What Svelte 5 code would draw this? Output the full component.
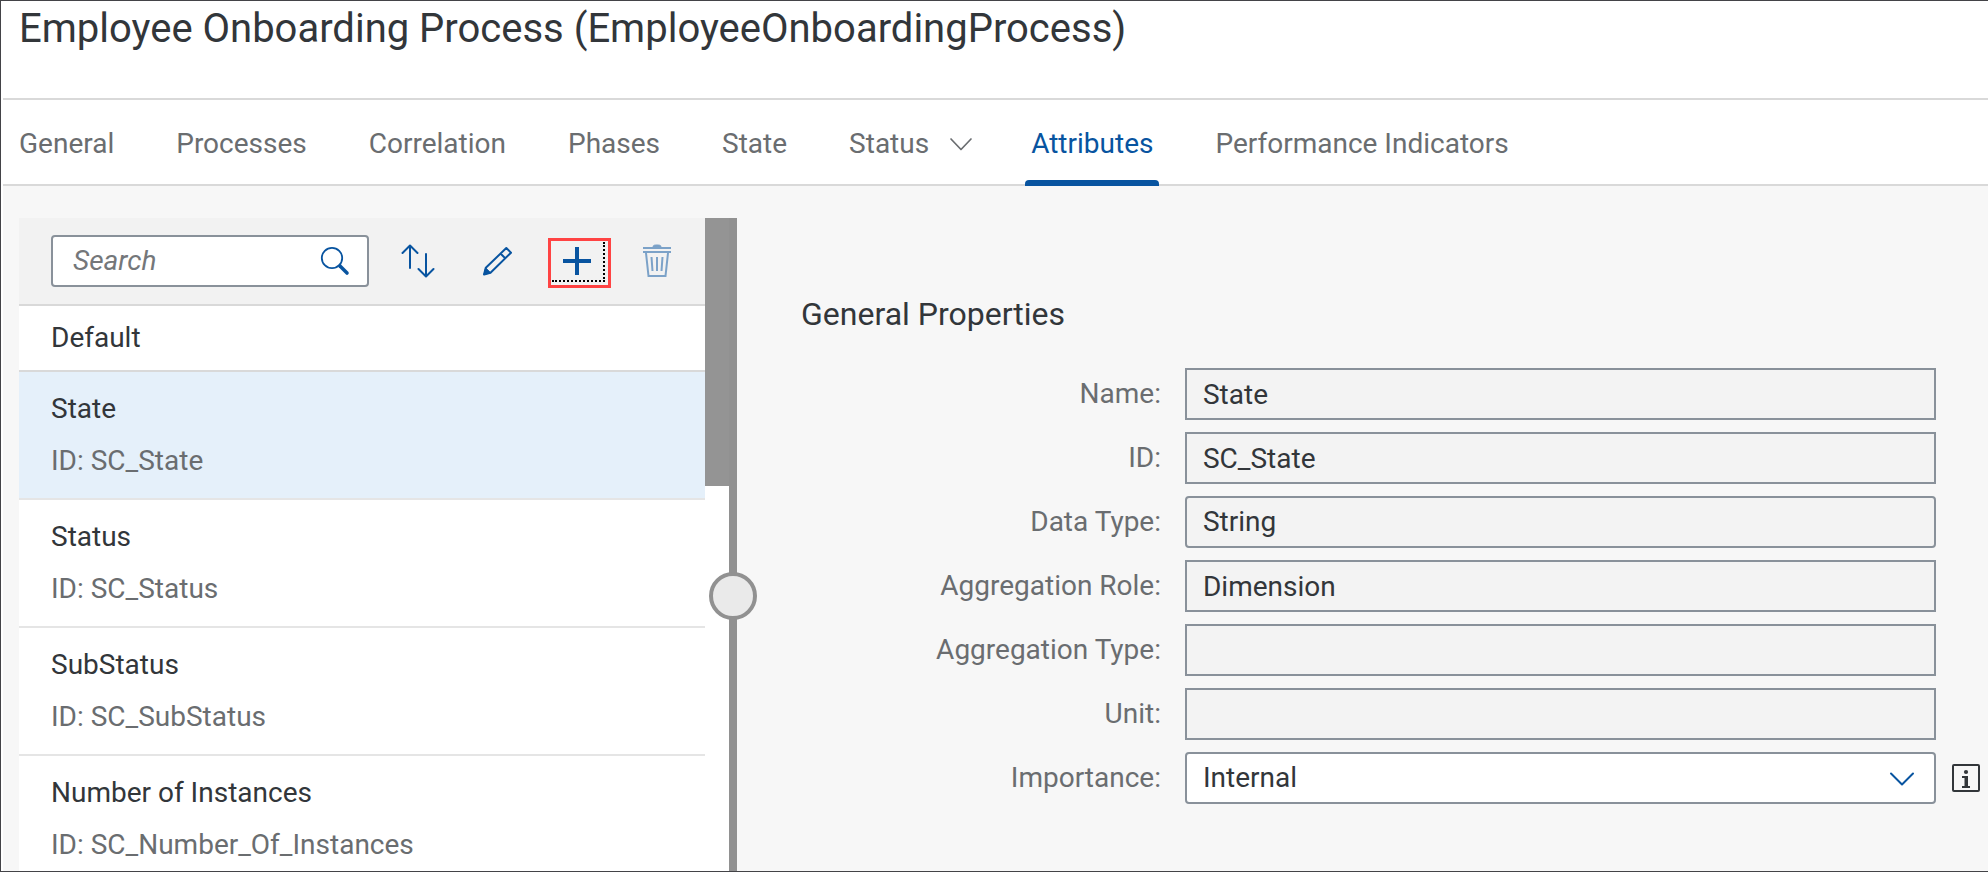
<script>
  const tabs = ['General', 'Processes', 'Correlation', 'Phases', 'State', 'Status', 'Attributes', 'Performance Indicators'];
  let activeTab = $state('Attributes');

  const attributes = [
    { name: 'State', id: 'SC_State' },
    { name: 'Status', id: 'SC_Status' },
    { name: 'SubStatus', id: 'SC_SubStatus' },
    { name: 'Number of Instances', id: 'SC_Number_Of_Instances' }
  ];
  let selected = $state('SC_State');

  const fields = [
    { key: 'name', label: 'Name', value: 'State' },
    { key: 'id', label: 'ID', value: 'SC_State' },
    { key: 'type', label: 'Data Type', value: 'String', select: true },
    { key: 'role', label: 'Aggregation Role', value: 'Dimension' },
    { key: 'aggregation', label: 'Aggregation Type', value: '' },
    { key: 'unit', label: 'Unit', value: '' }
  ];
</script>

<div class="app">
  <header>
    <h1>Employee Onboarding Process (EmployeeOnboardingProcess)</h1>
  </header>

  <nav class="tabs">
    {#each tabs as tab}
      <button class="tab" class:active={tab === activeTab} onclick={() => (activeTab = tab)}>
        <span>{tab}</span>
        {#if tab === 'Status'}
          <svg width="24" height="24" viewBox="0 0 24 24" fill="none" stroke="currentColor" stroke-width="1.7" stroke-linecap="round" stroke-linejoin="round"><path d="M2 7 12 17.5 22 7" /></svg>
        {/if}
      </button>
    {/each}
  </nav>

  <main>
    <section class="master">
      <div class="list">
        <div class="toolbar">
          <div class="search">
            <input type="text" placeholder="Search" aria-label="Search" />
            <button class="find" aria-label="Find">
              <svg width="32" height="32" viewBox="0 0 32 32" fill="none" stroke="currentColor" stroke-linecap="round"><circle cx="13" cy="13" r="10.2" stroke-width="1.8" /><path d="m21 21 7 7" stroke-width="3.6" /></svg>
            </button>
          </div>
          <button class="tool" aria-label="Sort">
            <svg width="36" height="36" viewBox="0 0 36 36" fill="none" stroke="currentColor" stroke-width="2" stroke-linecap="round" stroke-linejoin="round"><path d="M11 25V3M3.5 10 11 2.500 18.5 10M27 11v22M19.5 26 27 33.5 34.5 26" /></svg>
          </button>
          <button class="tool" aria-label="Edit">
            <svg width="32" height="32" viewBox="0 0 32 32" fill="none" stroke="currentColor" stroke-width="2" stroke-linejoin="round"><path d="M3 29.5 4.8 22.8 25.3 3 30 7.7 9.5 27.7ZM19.5 8.5l4.7 4.7" /><path d="m3 29.5 1.6-6.7 5 5Z" fill="currentColor" stroke-width="1" /></svg>
          </button>
          <button class="tool" aria-label="Add">
            <svg width="32" height="32" viewBox="0 0 32 32" fill="none" stroke="currentColor" stroke-width="4"><path d="M2 16h28M16 2v28" /></svg>
            <span class="highlight"></span>
          </button>
          <button class="tool" aria-label="Delete" disabled>
            <svg width="32" height="36" viewBox="0 0 32 36" fill="none" stroke="currentColor" stroke-width="2"><path d="M2 5h28M2 9h28M5 10l2.5 23h17L27 10M10.5 14l1 14M16 14v14M21.5 14l-1 14" /><path d="M12 4c0-2 2-2 4-2s4 0 4 2Z" fill="currentColor" stroke-width="1" /></svg>
          </button>
        </div>
        <h2 class="group">Default</h2>
        <div class="items">
          {#each attributes as item}
            <button class="item" class:selected={item.id === selected} onclick={() => (selected = item.id)}>
              <span>{item.name}</span>
              <span class="sub">ID: {item.id}</span>
            </button>
          {/each}
        </div>
      </div>
      <div class="track"><div class="thumb"></div></div>
      <div class="splitter"><span class="grip"></span></div>
    </section>

    <section class="detail">
      <h2>General Properties</h2>
      <form>
        {#each fields as field}
          <div class="row">
            <label for={field.key}>{field.label}:</label>
            {#if field.select}
              <select id={field.key} class="field rounded" disabled><option>{field.value}</option></select>
            {:else}
              <input id={field.key} class="field" type="text" value={field.value} readonly />
            {/if}
          </div>
        {/each}
        <div class="row">
          <label for="importance">Importance:</label>
          <div class="picker">
            <select id="importance" class="field rounded editable"><option>Internal</option></select>
            <svg class="arrow" width="28" height="24" viewBox="0 0 28 24" fill="none" stroke="currentColor" stroke-width="2" stroke-linecap="round" stroke-linejoin="round"><path d="M3 7.5 14 18.5 25 7.5" /></svg>
          </div>
          <button type="button" class="info" aria-label="Information">
            <svg width="28" height="28" viewBox="0 0 28 28"><rect x="1" y="1" width="26" height="26" rx="1" fill="none" stroke="currentColor" stroke-width="2" /><circle cx="14" cy="8" r="2.1" fill="currentColor" /><path d="M10 12h6v10h2v2h-8v-2h2.5v-8H10Z" fill="currentColor" /></svg>
          </button>
        </div>
      </form>
    </section>
  </main>
</div>

<style>
  :global(body) {
    margin: 0;
  }
  .app {
    box-sizing: border-box;
    height: 100vh;
    overflow: hidden;
    display: flex;
    flex-direction: column;
    padding-left: 2px;
    border: 1px solid #434347;
    border-right: 0;
    background: #fff;
    color: #32363a;
    font: 28px/38px Roboto, Arial, sans-serif;
  }
  h1, h2 {
    margin: 0;
    font-weight: 400;
  }
  button, input, select {
    box-sizing: border-box;
    margin: 0;
    padding: 0;
    border: 0;
    background: none;
    color: inherit;
    font: inherit;
  }
  svg {
    display: block;
    flex: none;
  }
  header {
    padding: 3px 16px 44px;
    border-bottom: 2px solid #d9d9d9;
  }
  h1 {
    font-size: 40px;
    line-height: 50px;
  }
  .tabs {
    display: flex;
    flex: none;
    gap: 62px;
    height: 84px;
    padding: 0 16px;
    border-bottom: 2px solid #d9d9d9;
    color: #6a6d70;
  }
  .tab {
    position: relative;
    display: flex;
    align-items: center;
    gap: 20px;
    padding-top: 4px;
    white-space: nowrap;
  }
  .tab svg {
    margin-right: -4px;
  }
  .active {
    color: #0854a0;
  }
  .active::after {
    content: '';
    position: absolute;
    left: -6px;
    right: -6px;
    bottom: -2px;
    height: 6px;
    border-radius: 4px 4px 0 0;
    background: #0854a0;
  }
  main {
    flex: 1;
    min-height: 0;
    display: flex;
    padding: 32px 8px 0 16px;
    background: #f7f7f7;
  }
  .master {
    display: flex;
    flex: 0 0 718px;
    min-width: 0;
    max-width: 50%;
    background: #fff;
  }
  .list {
    flex: 1 1 0;
    min-width: 0;
    overflow: hidden;
  }
  .toolbar {
    display: flex;
    align-items: center;
    gap: 8px;
    height: 86px;
    padding: 0 12px 0 32px;
    border-bottom: 2px solid #d9d9d9;
    background: #f2f2f2;
  }
  .search {
    box-sizing: border-box;
    display: flex;
    flex: 1 1 0;
    min-width: 0;
    height: 52px;
    margin-right: 4px;
    padding: 0 16px 0 20px;
    border: 2px solid #89919a;
    border-radius: 4px;
    background: #fff;
  }
  .search input {
    flex: 1 1 0;
    width: 0;
    min-width: 0;
    outline: none;
  }
  .search input::placeholder {
    color: #74777a;
    font-style: italic;
    opacity: 1;
  }
  .find, .tool {
    display: flex;
    align-items: center;
    justify-content: center;
    color: #0854a0;
  }
  .tool {
    position: relative;
    flex: 0 0 72px;
    height: 52px;
  }
  .tool:disabled {
    opacity: 0.5;
  }
  .highlight {
    position: absolute;
    inset: 3px 2px -1px 7px;
    border: 3px solid #ff4343;
  }
  .highlight::after {
    content: '';
    position: absolute;
    inset: 1px 3px 3px 1px;
    border: 2px dotted #000;
    border-width: 0 2px 2px 0;
  }
  .group {
    height: 64px;
    padding-left: 32px;
    border-bottom: 2px solid #d9d9d9;
    font-size: 28px;
    line-height: 64px;
  }
  .items {
    display: flex;
    flex-direction: column;
  }
  .item {
    display: flex;
    flex-direction: column;
    gap: 14px;
    padding: 18px 32px;
    border-bottom: 2px solid #e5e5e5;
    text-align: left;
  }
  .selected {
    background: #e5f0fa;
  }
  .sub {
    color: #6a6d70;
  }
  .track {
    flex: 0 0 24px;
  }
  .thumb {
    height: 41%;
    background: #949494;
  }
  .splitter {
    position: relative;
    flex: 0 0 8px;
    background: #919191;
  }
  .grip {
    position: absolute;
    top: 354px;
    left: -20px;
    box-sizing: border-box;
    width: 48px;
    height: 48px;
    border: 4px solid #919191;
    border-radius: 50%;
    background: #eaeaea;
  }
  .detail {
    flex: 1;
    min-width: 0;
    padding: 76px 0 0 64px;
  }
  .detail h2 {
    font-size: 32px;
    line-height: 40px;
  }
  form {
    display: flex;
    flex-direction: column;
    gap: 12px;
    margin-top: 34px;
  }
  .row {
    display: grid;
    grid-template-columns: minmax(0, 49fr) minmax(0, 100fr) 28px;
    align-items: center;
    column-gap: 16px;
  }
  label {
    padding-right: 8px;
    color: #6a6d70;
    text-align: right;
  }
  .field {
    width: 100%;
    height: 52px;
    padding: 0 16px;
    border: 2px solid #89919a;
    background: #f3f3f3;
    color: #32363a;
    appearance: none;
    outline: none;
  }
  .field:disabled {
    opacity: 1;
  }
  .rounded {
    border-radius: 4px;
  }
  .editable {
    background: #fff;
  }
  .picker {
    position: relative;
  }
  .arrow {
    position: absolute;
    top: 14px;
    right: 20px;
    color: #0854a0;
    pointer-events: none;
  }
</style>
